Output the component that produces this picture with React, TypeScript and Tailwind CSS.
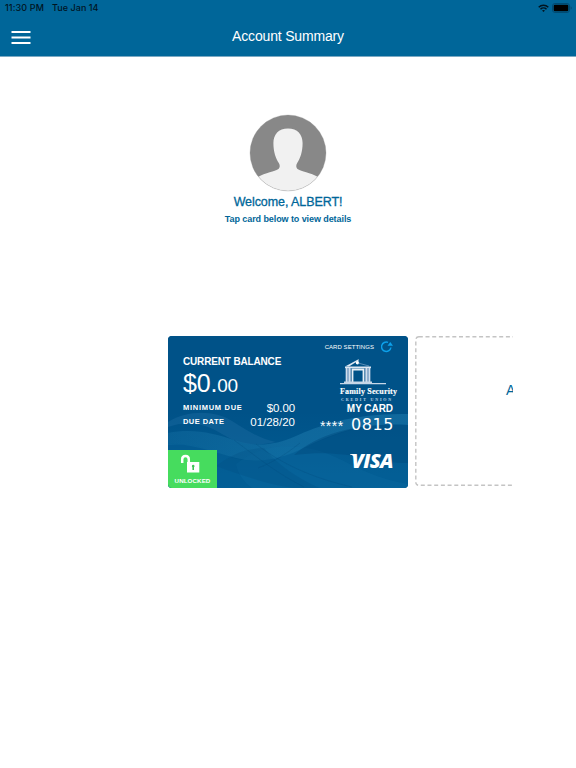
const account = {
  name: 'ALBERT',
  dollars: '$0.',
  cents: '00',
  minimumDue: '$0.00',
  dueDate: '01/28/20',
  lastFour: '0815',
};

function StatusBar() {
  return (
    <div className="flex h-4 items-center justify-between pl-[5px] pr-1 font-['Inter'] text-[9px] font-medium leading-4 text-[#00141f]">
      <div className="flex gap-2">
        <span className="tracking-[0.12px]">11:30 PM</span>
        <span className="tracking-[0.05px]">Tue Jan 14</span>
      </div>
      <div className="flex items-center gap-[3px]">
        <svg width="11" height="9" viewBox="0 0 11 9" fill="none" stroke="currentColor" strokeWidth="1.5">
          <path d="M0.7 3.3a6.9 6.9 0 0 1 9.6 0" />
          <path d="M2.5 5.2a4.3 4.3 0 0 1 6 0" />
          <path d="M4 6.6a2.2 2.2 0 0 1 3 0L5.5 8.1z" fill="currentColor" stroke="none" />
        </svg>
        <svg width="20" height="10" viewBox="0 0 20 10">
          <rect x="0.5" y="0.5" width="17" height="9" rx="2.5" fill="none" stroke="#004b73" />
          <rect x="1.7" y="1.7" width="14.6" height="6.6" rx="1.2" fill="#000" />
          <path d="M18.6 3.3v3.4q1.2-.4 1.2-1.7t-1.2-1.7z" fill="#004b73" />
        </svg>
      </div>
    </div>
  );
}

function Header() {
  return (
    <header className="h-[57px] border-b border-[#7ba9c3] bg-[#006699]">
      <StatusBar />
      <div className="grid h-10 grid-cols-[1fr_auto_1fr] items-center">
        <svg width="32" height="16" viewBox="0 0 32 16" className="mt-[1px]">
          <path d="M11.500 3h19M11.500 8.500h19M11.500 14h19" stroke="#fff" strokeWidth="2" />
        </svg>
        <h1 className="text-[14px] tracking-[-0.17px] text-white">Account Summary</h1>
      </div>
    </header>
  );
}

function Avatar() {
  return (
    <svg width="78" height="78" viewBox="0 0 78 78">
      <defs>
        <clipPath id="avatar">
          <circle cx="39" cy="39" r="38" />
        </clipPath>
      </defs>
      <g clipPath="url(#avatar)">
        <rect width="78" height="78" fill="#888" />
        <path
          d="M39 14.5c-9.5 0-14.6 6-14.6 14.5 0 9 2.400 15.500 5.400 20 1.400 2.200 1.300 4.800-.8 6.300C26 57.400 17 58.500 8 63.500V78h62V63.500c-9-5-18-6.100-21-8.200-2.100-1.500-2.200-4.100-.8-6.300 3-4.500 5.400-11 5.400-20 0-8.500-5.100-14.500-14.600-14.500z"
          fill="#f1f1f1"
        />
      </g>
      <circle cx="39" cy="39" r="38" fill="none" stroke="#8a8a8a" strokeOpacity="0.45" strokeWidth="0.6" />
    </svg>
  );
}

function Waves() {
  return (
    <svg className="absolute inset-0" width="240" height="152" viewBox="0 0 240 152" fill="none">
      <defs>
        <linearGradient id="base" x1="0" y1="0" x2="0" y2="1">
          <stop offset="0.5" stopColor="#005288" />
          <stop offset="1" stopColor="#005d94" />
        </linearGradient>
        <linearGradient id="crest" x1="0" y1="0" x2="1" y2="0">
          <stop offset="0" stopColor="#1b77aa" stopOpacity="0.3" />
          <stop offset="0.5" stopColor="#1b77aa" stopOpacity="0.55" />
          <stop offset="1" stopColor="#1b77aa" stopOpacity="0.6" />
        </linearGradient>
      </defs>
      <rect width="240" height="152" fill="url(#base)" />
      <path d="M0 86C20 74 46 74 64 85s28 18 44 21c-22 5-38 2-54-8S20 84 0 91z" fill="#17689e" fillOpacity="0.5" />
      <path d="M0 97c24-5 46 0 66 7s40 6 62-4 56-23 112-22v11c-46-3-74 8-100 21s-48 18-72 12S22 106 0 109z" fill="url(#crest)" />
      <path d="M0 108c24-2 46 8 66 14s48 0 72-11 60-25 102-25v66H0z" fill="#0c6ba1" fillOpacity="0.22" />
      <path d="M68 128c24-18 46-21 76-15s48 27 96 35v4H84c-8-6-14-14-16-24z" fill="#1474a8" fillOpacity="0.22" />
      <path d="M126 119c26-23 66-32 114-30v38c-34 0-62-15-114-8z" fill="#004b80" fillOpacity="0.5" />
      <path d="M48 130c18-13 28-17 48-18 14 17 34 31 56 40h-26c-25-3-50-12-78-22z" fill="#004b80" fillOpacity="0.25" />
      <path d="M88 108c24 19 56 34 96 43M66 104c24 18 44 34 70 47M90 132c16-6 28-14 42-25" stroke="#004579" strokeOpacity="0.3" strokeWidth="0.8" />
    </svg>
  );
}

function BankLogo() {
  return (
    <div className="flex w-[58px] flex-col text-white">
      <svg width="58" height="28" viewBox="0 0 58 28" fill="none">
        <path d="M5.500 8.300L18.500 1.200l.5 1-10 6.300z" fill="#dbe6f2" />
        <circle cx="17.500" cy="4.800" r="1.700" fill="#fff" />
        <path d="M18 5l11 3" stroke="#7ba4c8" strokeWidth="0.7" />
        <path d="M5 9.300h26" stroke="#dbe6f2" strokeWidth="1.800" />
        <path d="M5.500 10h5.500v14H5.500zM25 10h5.500v14H25z" fill="#8faecd" />
        <path d="M6.500 10v14M9.500 10v14M26.500 10v14M29.500 10v14" stroke="#d0deec" strokeWidth="1" />
        <path d="M12.500 24V11.500h11V24" stroke="#e8f0f7" strokeWidth="1.800" />
        <path d="M4 23.500h28v1.400h14v1.400H0v-1.400h4z" fill="#c6d7e8" />
      </svg>
      <span className="whitespace-nowrap font-['Liberation_Serif'] text-[8px] font-bold leading-[12px] tracking-[0.18px] [-webkit-text-stroke:0.15px]">
        Family Security
      </span>
      <span className="whitespace-nowrap pl-[1px] font-['Liberation_Serif'] text-[4px] font-bold leading-[3px] tracking-[1.85px] text-[#c3d5e6]">
        CREDIT UNION
      </span>
    </div>
  );
}

function BalanceCard() {
  return (
    <div className="relative h-[152px] w-[240px] shrink-0 overflow-hidden rounded-[4px] bg-[#005288] text-white">
      <Waves />
      <div className="relative flex h-full flex-col justify-between">
        <div className="flex h-[100px] justify-between pl-[15px] pr-[10px]">
          <div className="w-[112px] pt-[20px]">
            <p className="whitespace-nowrap text-[10px] font-bold leading-[11px] tracking-[-0.16px]">CURRENT BALANCE</p>
            <p className="pt-[3px] text-[25px] leading-[26px] tracking-[-0.2px]">
              {account.dollars}
              <span className="text-[19px]">{account.cents}</span>
            </p>
            <div className="flex h-[14px] items-center justify-between pt-[3px]">
              <span className="text-[7.5px] font-bold tracking-[0.72px]">MINIMUM DUE</span>
              <span className="pt-[2px] text-[11.5px] tracking-[-0.1px]">{account.minimumDue}</span>
            </div>
            <div className="flex h-[14px] items-center justify-between pt-[4px]">
              <span className="text-[7.5px] font-bold tracking-[0.45px]">DUE DATE</span>
              <span className="pt-[2px] text-[11.5px]">{account.dueDate}</span>
            </div>
          </div>
          <div className="flex flex-col items-end pt-[4px]">
            <div className="flex h-[13px] items-center gap-[7px] pr-[5px]">
              <span className="pt-[1px] text-[6px] tracking-[0.05px]">CARD SETTINGS</span>
              <svg width="12" height="12" viewBox="0 0 12 12" fill="none">
                <path d="M7 1.400A4.700 4.700 0 1 0 9.900 6.500" stroke="#0ca0ea" strokeWidth="1.500" />
                <path d="M6.500 4.800L9.300 1l2.700 3.800z" fill="#0ca0ea" />
              </svg>
            </div>
            <div className="h-[50px] pt-[5px]">
              <BankLogo />
            </div>
            <p className="pr-[5px] text-[10px] font-bold leading-[11px] tracking-[-0.05px]">MY CARD</p>
            <div className="flex items-center gap-[7px] pr-[4px] pt-[2px]">
              <span className="pt-[3px] text-[14px] leading-[13px] tracking-[0.55px]">****</span>
              <span className="font-['DejaVu_Sans'] text-[16px] leading-[17px] tracking-[0.6px]">{account.lastFour}</span>
            </div>
          </div>
        </div>
        <div className="flex items-end justify-between">
          <div className="flex h-[38px] w-[49px] flex-col items-center bg-[#46dc5e] pt-[4px]">
            <svg width="20" height="20" viewBox="0 0 20 20" fill="none" className="-ml-[6px]">
              <path d="M2.200 9V5.400Q2.200 2 5.500 2T8.800 5.400V8" stroke="#fff" strokeWidth="2.500" />
              <path d="M7 8h12.300v10.500H7z" fill="#fff" />
              <path d="M13.200 10.800a1.400 1.400 0 0 1 .8 2.500V16h-1.600v-2.700a1.400 1.400 0 0 1 .8-2.500z" fill="#3cc455" />
            </svg>
            <span className="pt-[3px] text-[6.200px] font-bold leading-[8px] tracking-[0.1px]">UNLOCKED</span>
          </div>
          <div className="flex items-start pb-[17px] pr-[15px]">
            <svg width="6" height="9" viewBox="0 0 6 9" className="-mr-[4px] mt-[3px]">
              <path d="M0 0h4.800l1 5C4.500 2.500 2.500 1.200 0 .6z" fill="#fff" />
            </svg>
            <span className="font-['Open_Sans'] text-[20px] font-extrabold italic leading-[20px] tracking-[-0.6px]">VISA</span>
          </div>
        </div>
      </div>
    </div>
  );
}

function NextCard() {
  return (
    <div className="flex h-[150px] w-[240px] shrink-0 items-start">
      <svg width="240" height="150" viewBox="0 0 240 150" fill="none" className="shrink-0">
        <rect x="0.8" y="0.8" width="238" height="148.500" rx="3" stroke="#c4c4c4" strokeWidth="1.400" strokeDasharray="4 2.700" />
      </svg>
      <span className="-ml-[149px] pt-[44px] text-[14px] leading-5 text-[#006699]">A</span>
    </div>
  );
}

export default function App() {
  return (
    <div className="flex h-[768px] w-[576px] flex-col overflow-hidden bg-white font-['Liberation_Sans',sans-serif]">
      <Header />
      <main className="flex flex-col">
        <section className="flex h-[279px] flex-col items-center pt-[57px] text-[#006699]">
          <Avatar />
          <p className="pt-[2px] text-[12.5px] leading-4 tracking-[-0.08px] [-webkit-text-stroke:0.3px]">Welcome, {account.name}!</p>
          <p className="pt-[2px] text-[9px] font-bold leading-[14px] tracking-[-0.08px]">Tap card below to view details</p>
        </section>
        <section className="ml-[168px] flex w-[345px] gap-[7px] overflow-hidden">
          <BalanceCard />
          <NextCard />
        </section>
      </main>
    </div>
  );
}
